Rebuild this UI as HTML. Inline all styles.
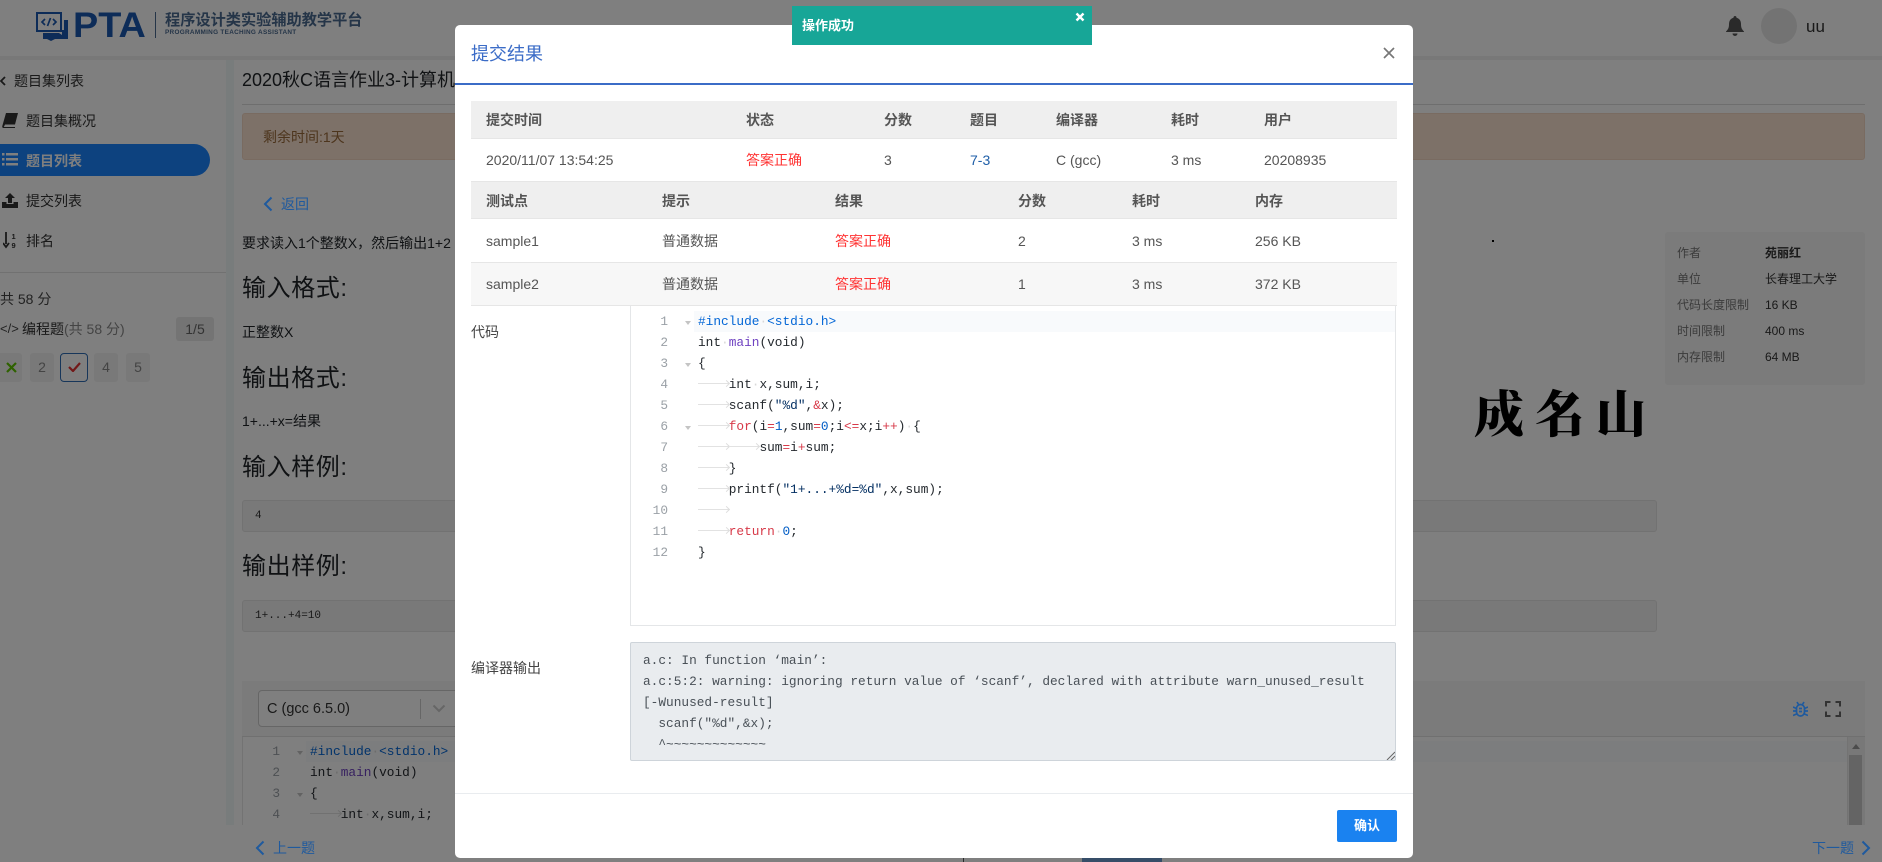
<!DOCTYPE html>
<html lang="zh"><head><meta charset="utf-8"><title>PTA</title>
<style>
*{box-sizing:border-box}
html,body{margin:0;padding:0;width:1882px;height:862px;overflow:hidden;background:#fff}
body{position:relative;font-family:"Liberation Sans","Noto Sans CJK SC",sans-serif;font-size:14px;color:#212529}
.t{position:absolute;white-space:nowrap;line-height:20px}
.b{position:absolute}
.h{font-size:24px;line-height:32px;color:#212529;left:242px;letter-spacing:.6px}
.m{font-family:"Liberation Mono",monospace}
.ln{position:absolute;text-align:right;font:12.8px/21px "Liberation Mono",monospace;color:#9aa0a6;white-space:pre}
.code{position:absolute;font:12.8px/21px "Liberation Mono",monospace;color:#24292e;white-space:pre}
.k{color:#d73a49}.n{color:#005cc5}.s{color:#032f62}.f{color:#6f42c1}.i{color:#0366d6}
.d{color:#d8d8d8}
.tab{display:inline-block;width:30.72px;height:1px;background:#e2e2e2;vertical-align:middle;position:relative;top:-1px}
.tab:after{content:"";position:absolute;right:0;top:-2px;width:4px;height:4px;border-top:1px solid #ddd;border-right:1px solid #ddd;transform:rotate(45deg)}
.fold{position:absolute;width:0;height:0;border-left:3px solid transparent;border-right:3px solid transparent;border-top:4px solid #c4c4c4}
#ov{position:absolute;left:0;top:0;width:1882px;height:862px;background:rgba(0,0,0,.5)}
#modal{position:absolute;left:455px;top:25px;width:958px;height:833px;background:#fff;border-radius:5px}
.th{color:#555;font-weight:bold;margin-left:-1px}
.td{color:#555;margin-left:-1px}
.red{color:#f33;margin-left:-1px}
.lk{z-index:1;color:#1f5a9e}
.tile{position:absolute;top:353px;height:29px;width:24px;background:#f2f2f2;border-radius:3px;text-align:center;line-height:29px;color:#888;font-size:14px}
</style></head><body>

<!-- header -->
<div class="b" style="left:0;top:56px;width:1882px;height:4px;background:#f0f0f0"></div>
<svg class="b" style="left:36px;top:11px" width="32" height="30" viewBox="0 0 32 30">
<path d="M1 2h24v18H1z" fill="#fff" stroke="#1a58b0" stroke-width="2"/>
<path d="M28 9h4v19H19l-4 2-4-2H7v-6h16l3 2v-5h2z" fill="#1a58b0"/>
<path d="M9 8l-3 3 3 3M17 8l3 3-3 3M14.500 7l-3 8" fill="none" stroke="#1a58b0" stroke-width="1.700"/>
</svg>
<div class="t" style="left:73px;top:6px;font-size:35px;line-height:40px;font-weight:bold;color:#1a58b0;transform:scaleX(1.08);transform-origin:0 0">PTA</div>
<div class="b" style="left:155px;top:12px;width:1px;height:26px;background:#4a6a90"></div>
<div class="t" style="left:165px;top:11px;font-size:15.200px;font-weight:bold;color:#4a6a90">程序设计类实验辅助教学平台</div>
<div class="t" style="left:165px;top:28px;font-size:6.400px;line-height:10px;font-weight:bold;color:#4a6a90;letter-spacing:.3px">PROGRAMMING TEACHING ASSISTANT</div>
<svg class="b" style="left:1726px;top:16px" width="18" height="20" viewBox="0 0 18 20"><path d="M9 0a1.500 1.500 0 0 1 1.500 1.700C13.500 2.400 15 5 15 8c0 4 1 5.500 3 7.500V16H0v-.5C2 13.500 3 12 3 8c0-3 1.500-5.600 4.500-6.300A1.500 1.500 0 0 1 9 0zM6.500 17.500h5a2.500 2.500 0 0 1-5 0z" fill="#555"/></svg>
<div class="b" style="left:1761px;top:8px;width:36px;height:36px;border-radius:50%;background:#e6e6e6"></div>
<div class="t" style="left:1806px;top:17px;font-size:17px;color:#333">uu</div>

<!-- sidebar -->
<svg class="b" style="left:0;top:76px" width="6" height="10" viewBox="0 0 6 10"><path d="M5 1L1 5l4 4" fill="none" stroke="#333" stroke-width="1.800"/></svg>
<div class="t" style="left:14px;top:71px;color:#333">题目集列表</div>
<svg class="b" style="left:2px;top:113px" width="16" height="15" viewBox="0 0 16 15"><path d="M4 0h12l-3 11.500H3L1.800 14H13v1H1.500C.5 15 0 14 .3 13z" fill="#333"/></svg>
<div class="t" style="left:26px;top:111px;color:#333">题目集概况</div>
<div class="b" style="left:-20px;top:144px;width:230px;height:32px;background:#1a84ff;border-radius:16px"></div>
<svg class="b" style="left:2px;top:153px" width="16" height="13" viewBox="0 0 16 13"><path d="M0 0h2.500v2.500H0zM4 0h12v2.500H4zM0 5h2.500v2.500H0zM4 5h12v2.500H4zM0 10h2.500v2.500H0zM4 10h12v2.500H4z" fill="#fff"/></svg>
<div class="t" style="left:26px;top:151px;color:#fff;font-weight:bold">题目列表</div>
<svg class="b" style="left:2px;top:193px" width="16" height="15" viewBox="0 0 16 15"><path d="M8 0l5 5H10v5H6V5H3zM0 9h4.500v2h7V9H16v6H0z" fill="#333"/></svg>
<div class="t" style="left:26px;top:191px;color:#333">提交列表</div>
<svg class="b" style="left:3px;top:232px" width="14" height="17" viewBox="0 0 14 17"><path d="M3 0v12M0 11l3 4 3-4" fill="none" stroke="#333" stroke-width="1.800"/><text x="8.500" y="7" font-size="7.500" font-weight="bold" fill="#333" font-family="Liberation Sans">1</text><text x="8.500" y="16" font-size="7.500" font-weight="bold" fill="#333" font-family="Liberation Sans">9</text></svg>
<div class="t" style="left:26px;top:231px;color:#333">排名</div>
<div class="b" style="left:0;top:272px;width:226px;height:1px;background:#e2e2e2"></div>
<div class="t" style="left:0;top:289px;color:#444">共 58 分</div>
<div class="t" style="left:0;top:319px;color:#444;font-size:13px">&lt;/&gt;</div>
<div class="t" style="left:22px;top:319px;color:#333">编程题<span style="color:#888">(共 58 分)</span></div>
<div class="b" style="left:176px;top:317px;width:38px;height:24px;background:#e8e8e8;border-radius:3px;text-align:center;line-height:24px;color:#666">1/5</div>
<div class="tile" style="left:-2px"><svg width="11" height="11" viewBox="0 0 11 11" style="vertical-align:-1px;margin-left:2px"><path d="M1 1l9 9M10 1l-9 9" stroke="#5fc400" stroke-width="2.200"/></svg></div>
<div class="tile" style="left:30px">2</div>
<div class="tile" style="left:60px;width:28px;background:transparent;border:1.500px solid #2f6db5;line-height:26px;border-radius:4px"><svg width="13" height="10" viewBox="0 0 13 10"><path d="M1 5l4 4 7-8" fill="none" stroke="#e53030" stroke-width="2.200"/></svg></div>
<div class="tile" style="left:94px">4</div>
<div class="tile" style="left:126px">5</div>

<!-- main -->
<div class="b" style="left:226px;top:60px;width:8px;height:765px;background:#f0f8f8"></div>
<div class="t" style="left:242px;top:66px;font-size:18px;line-height:28px;color:#212529">2020秋C语言作业3-计算机</div>
<div class="b" style="left:242px;top:104px;width:1623px;height:1px;background:#ddd"></div>
<div class="b" style="left:242px;top:113px;width:1623px;height:47px;background:#fbe3d1;border:1px solid #f3d6c2;border-radius:3px"></div>
<div class="t" style="left:263px;top:127px;color:#9a6a3a">剩余时间:1天</div>
<svg class="b" style="left:263px;top:196px;z-index:1" width="10" height="16" viewBox="0 0 10 16"><path d="M8.500 1.500L2 8l6.500 6.500" fill="none" stroke="#1f5a9e" stroke-width="2"/></svg>
<div class="t lk" style="left:281px;top:194px">返回</div>
<div class="t" style="left:242px;top:233px;color:#212529">要求读入1个整数X，然后输出1+2</div>
<div class="t h" style="top:273px">输入格式:</div>
<div class="t" style="left:242px;top:322px">正整数X</div>
<div class="t h" style="top:363px">输出格式:</div>
<div class="t" style="left:242px;top:411px">1+...+x=结果</div>
<div class="t h" style="top:452px">输入样例:</div>
<div class="b" style="left:242px;top:500px;width:1415px;height:32px;background:#f3f3f3;border:1px solid #e4e4e4;border-radius:3px"></div>
<div class="t m" style="left:255px;top:506px;font-size:11px;color:#333">4</div>
<div class="t h" style="top:551px">输出样例:</div>
<div class="b" style="left:242px;top:600px;width:1415px;height:32px;background:#f3f3f3;border:1px solid #e4e4e4;border-radius:3px"></div>
<div class="t m" style="left:255px;top:606px;font-size:11px;color:#333">1+...+4=10</div>

<div class="b" style="left:1665px;top:232px;width:200px;height:153px;background:#f7f7f7;border-radius:3px"></div>
<div class="t" style="left:1677px;top:243px;font-size:12px;color:#777">作者</div><div class="t" style="left:1765px;top:243px;font-size:12px;color:#333;font-weight:bold">苑丽红</div>
<div class="t" style="left:1677px;top:269px;font-size:12px;color:#777">单位</div><div class="t" style="left:1765px;top:269px;font-size:12px;color:#333">长春理工大学</div>
<div class="t" style="left:1677px;top:295px;font-size:12px;color:#777">代码长度限制</div><div class="t" style="left:1765px;top:295px;font-size:12px;color:#333">16 KB</div>
<div class="t" style="left:1677px;top:321px;font-size:12px;color:#777">时间限制</div><div class="t" style="left:1765px;top:321px;font-size:12px;color:#333">400 ms</div>
<div class="t" style="left:1677px;top:347px;font-size:12px;color:#777">内存限制</div><div class="t" style="left:1765px;top:347px;font-size:12px;color:#333">64 MB</div>
<div class="b" style="left:1492px;top:240px;width:2px;height:2px;background:#000"></div>
<div class="t" style="left:1474px;top:381px;font-family:'Noto Serif CJK SC',serif;font-weight:900;font-size:50px;line-height:60px;letter-spacing:11px;color:#000">成名山</div>

<!-- editor -->
<div class="b" style="left:242px;top:681px;width:1623px;height:56px;background:#f7f7f7;border-bottom:1px solid #e0e0e0"></div>
<div class="b" style="left:258px;top:690px;width:210px;height:37px;background:#fff;border:1px solid #ccc;border-radius:4px"></div>
<div class="t" style="left:267px;top:699px;font-size:14.500px;color:#333">C (gcc 6.5.0)</div>
<div class="b" style="left:420px;top:699px;width:1px;height:20px;background:#ccc"></div>
<svg class="b" style="left:432px;top:704px" width="14" height="9" viewBox="0 0 14 9"><path d="M1.500 1.500L7 7l5.500-5.500" fill="none" stroke="#ccc" stroke-width="2"/></svg>
<div class="b" style="left:242px;top:737px;width:1623px;height:88px;background:#fff;border-left:1px solid #e6e6e6;border-right:1px solid #e6e6e6"></div>
<div class="b" style="left:306px;top:741px;width:1541px;height:21px;background:#f8fafc"></div>
<div class="ln" style="left:240px;top:741px;width:40px">1
2
3
4</div>
<div class="fold" style="left:297px;top:751px"></div><div class="fold" style="left:297px;top:793px"></div>
<div class="code" style="left:310px;top:741px"><span class="i">#include<span class="d">·</span>&lt;stdio.h&gt;</span>
int<span class="d">·</span><span class="f">main</span>(void)
{
<i class="tab"></i>int<span class="d">·</span>x,sum,i;</div>
<div class="b" style="left:1847px;top:737px;width:18px;height:88px;background:#f1f1f1;border-left:1px solid #e6e6e6"></div>
<div class="b" style="left:1849px;top:755px;width:13px;height:70px;background:#c8c8c8"></div>
<div class="b" style="left:1852px;top:744px;width:0;height:0;border-left:4px solid transparent;border-right:4px solid transparent;border-bottom:5px solid #999"></div>
<svg class="b" style="left:1793px;top:701px;z-index:1" width="15" height="16" viewBox="0 0 15 16"><g fill="none" stroke="#1f5a9e" stroke-width="1.700"><rect x="3.500" y="3.500" width="8" height="11.500" rx="4"/><path d="M4 1l1.500 2.500M11 1L9.500 3.500M0 6l3.500 1.500M15 6l-3.500 1.500M0 10h3.500M15 10h-3.500M0 14.500l3.500-1.500M15 14.500L11.500 13M6 7.500h3M6 10.500h3"/></g></svg>
<svg class="b" style="left:1825px;top:701px" width="16" height="16" viewBox="0 0 16 16"><path d="M1 5.500V1h4.500M10.500 1H15v4.500M15 10.500V15h-4.500M5.500 15H1v-4.500" fill="none" stroke="#666" stroke-width="2"/></svg>

<!-- bottom -->
<svg class="b" style="left:255px;top:840px;z-index:1" width="10" height="16" viewBox="0 0 10 16"><path d="M8.500 1.500L2 8l6.500 6.500" fill="none" stroke="#1f5a9e" stroke-width="2"/></svg>
<div class="t lk" style="left:273px;top:838px">上一题</div>
<div class="t lk" style="left:1812px;top:838px">下一题</div>
<svg class="b" style="left:1861px;top:840px;z-index:1" width="10" height="16" viewBox="0 0 10 16"><path d="M1.500 1.500L8 8l-6.500 6.500" fill="none" stroke="#1f5a9e" stroke-width="2"/></svg>
<div class="b" style="left:963px;top:855px;width:1px;height:7px;background:#555"></div>
<div class="b" style="left:1082px;top:855px;width:80px;height:7px;background:#6c9ad0"></div>

<div id="ov"></div>

<!-- modal : coordinates relative to 455,25 -->
<div id="modal">
<div class="t" style="left:16px;top:16px;font-size:18px;line-height:26px;color:#3b6cc7">提交结果</div>
<svg class="b" style="left:928px;top:22px" width="12" height="12" viewBox="0 0 12 12"><path d="M1 1l10 10M11 1L1 11" stroke="#777" stroke-width="1.700"/></svg>
<div class="b" style="left:0;top:58px;width:958px;height:2px;background:#3b6cc7"></div>

<div class="b" style="left:16px;top:76px;width:926px;height:38px;background:#efefef;border-bottom:1px solid #e6e6e6"></div>
<div class="t th" style="left:32px;top:85px">提交时间</div>
<div class="t th" style="left:292px;top:85px">状态</div>
<div class="t th" style="left:430px;top:85px">分数</div>
<div class="t th" style="left:516px;top:85px">题目</div>
<div class="t th" style="left:602px;top:85px">编译器</div>
<div class="t th" style="left:717px;top:85px">耗时</div>
<div class="t th" style="left:810px;top:85px">用户</div>
<div class="t td" style="left:32px;top:125px">2020/11/07 13:54:25</div>
<div class="t red" style="left:292px;top:125px">答案正确</div>
<div class="t td" style="left:430px;top:125px">3</div>
<div class="t td" style="left:516px;top:125px;color:#1f5fa8">7-3</div>
<div class="t td" style="left:602px;top:125px">C (gcc)</div>
<div class="t td" style="left:717px;top:125px">3 ms</div>
<div class="t td" style="left:810px;top:125px">20208935</div>

<div class="b" style="left:16px;top:156px;width:926px;height:38px;background:#efefef;border-top:1px solid #e6e6e6;border-bottom:1px solid #e6e6e6"></div>
<div class="t th" style="left:32px;top:166px">测试点</div>
<div class="t th" style="left:208px;top:166px">提示</div>
<div class="t th" style="left:381px;top:166px">结果</div>
<div class="t th" style="left:564px;top:166px">分数</div>
<div class="t th" style="left:678px;top:166px">耗时</div>
<div class="t th" style="left:801px;top:166px">内存</div>
<div class="t td" style="left:32px;top:206px">sample1</div>
<div class="t td" style="left:208px;top:206px">普通数据</div>
<div class="t red" style="left:381px;top:206px">答案正确</div>
<div class="t td" style="left:564px;top:206px">2</div>
<div class="t td" style="left:678px;top:206px">3 ms</div>
<div class="t td" style="left:801px;top:206px">256 KB</div>
<div class="b" style="left:16px;top:237px;width:926px;height:44px;background:#f7f7f7;border-top:1px solid #e6e6e6;border-bottom:1px solid #e6e6e6"></div>
<div class="t td" style="left:32px;top:249px">sample2</div>
<div class="t td" style="left:208px;top:249px">普通数据</div>
<div class="t red" style="left:381px;top:249px">答案正确</div>
<div class="t td" style="left:564px;top:249px">1</div>
<div class="t td" style="left:678px;top:249px">3 ms</div>
<div class="t td" style="left:801px;top:249px">372 KB</div>

<div class="t" style="left:16px;top:297px;color:#444">代码</div>
<div class="b" style="left:175px;top:281px;width:766px;height:320px;border:1px solid #e4e6e8;border-top:none"></div>
<div class="b" style="left:239px;top:286px;width:701px;height:21px;background:#f8fafc"></div>
<div class="ln" style="left:173px;top:286px;width:40px">1
2
3
4
5
6
7
8
9
10
11
12</div>
<div class="fold" style="left:230px;top:296px"></div><div class="fold" style="left:230px;top:338px"></div><div class="fold" style="left:230px;top:401px"></div>
<div class="code" style="left:243px;top:286px"><span class="i">#include<span class="d">·</span>&lt;stdio.h&gt;</span>
int<span class="d">·</span><span class="f">main</span>(void)
{
<i class="tab"></i>int<span class="d">·</span>x,sum,i;
<i class="tab"></i>scanf(<span class="s">"%d"</span>,<span class="k">&amp;</span>x);
<i class="tab"></i><span class="k">for</span>(i<span class="k">=</span><span class="n">1</span>,sum<span class="k">=</span><span class="n">0</span>;i<span class="k">&lt;=</span>x;i<span class="k">++</span>)<span class="d">·</span>{
<i class="tab"></i><i class="tab"></i>sum<span class="k">=</span>i<span class="k">+</span>sum;
<i class="tab"></i>}
<i class="tab"></i>printf(<span class="s">"1+...+%d=%d"</span>,x,sum);
<i class="tab"></i>
<i class="tab"></i><span class="k">return</span><span class="d">·</span><span class="n">0</span>;
}</div>

<div class="t" style="left:16px;top:633px;color:#444">编译器输出</div>
<div class="b" style="left:175px;top:617px;width:766px;height:119px;background:#e9ecef;border:1px solid #ced4da;border-radius:2px"></div>
<div class="code" style="left:188px;top:625px;color:#495057">a.c: In function ‘main’:
a.c:5:2: warning: ignoring return value of ‘scanf’, declared with attribute warn_unused_result
[-Wunused-result]
  scanf("%d",&amp;x);
  ^~~~~~~~~~~~~~</div>
<svg class="b" style="left:931px;top:726px" width="9" height="9" viewBox="0 0 9 9"><path d="M1 9l8-8M5 9l4-4" stroke="#666" stroke-width="1"/></svg>

<div class="b" style="left:0;top:768px;width:958px;height:1px;background:#e9ecef"></div>
<div class="b" style="left:882px;top:785px;width:60px;height:32px;background:#1a82f0;border-radius:2px;text-align:center;line-height:32px;color:#fff;font-weight:bold;font-size:13px">确认</div>
</div>

<!-- toast -->
<div class="b" style="left:792px;top:6px;width:300px;height:39px;background:#17a697"></div>
<div class="t" style="left:802px;top:16px;font-size:13px;font-weight:bold;color:#fff">操作成功</div>
<svg class="b" style="left:1075px;top:12px" width="10" height="10" viewBox="0 0 10 10"><path d="M1.500 1.500l7 7M8.500 1.500l-7 7" stroke="#fff" stroke-width="2.400"/></svg>
</body></html>
